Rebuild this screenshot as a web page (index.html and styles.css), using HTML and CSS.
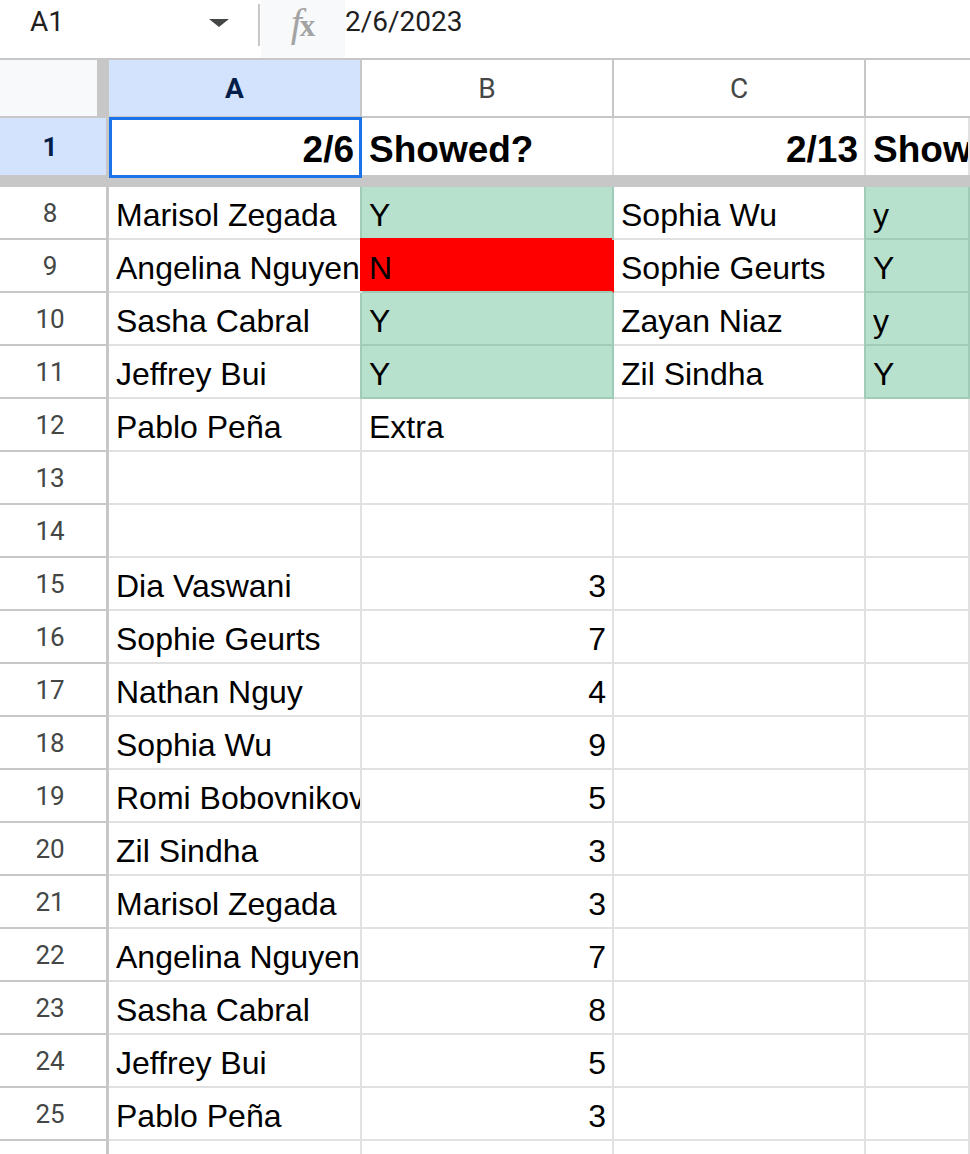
FILE: index.html
```html
<!DOCTYPE html>
<html>
<head>
<meta charset="utf-8">
<title>Sheet</title>
<link rel="stylesheet" href="styles.css">
</head>
<body>
<div class="app">
  <div class="topbar">
    <div class="namebox"><span class="ref">A1</span><span class="caret"></span></div>
    <div class="divider"></div>
    <div class="fxbox"><span class="fx"><span class="fx-f">f</span><span class="fx-x">x</span></span></div>
    <div class="formula">2/6/2023</div>
  </div>
  <div class="sheet">
    <div class="corner"></div>
    <div class="ch sel">A</div>
    <div class="ch">B</div>
    <div class="ch">C</div>
    <div class="ch wide"></div>

    <div class="rh sel r1h">1</div>
    <div class="c r1 right">2/6</div>
    <div class="c r1">Showed?</div>
    <div class="c r1 right">2/13</div>
    <div class="c r1">Showed?</div>

    <div class="freeze"></div>

    <div class="rh">8</div><div class="c">Marisol Zegada</div><div class="c g">Y</div><div class="c">Sophia Wu</div><div class="c g">y</div>
    <div class="rh">9</div><div class="c">Angelina Nguyen</div><div class="c red">N</div><div class="c">Sophie Geurts</div><div class="c g">Y</div>
    <div class="rh">10</div><div class="c">Sasha Cabral</div><div class="c g">Y</div><div class="c">Zayan Niaz</div><div class="c g">y</div>
    <div class="rh">11</div><div class="c">Jeffrey Bui</div><div class="c g">Y</div><div class="c">Zil Sindha</div><div class="c g">Y</div>
    <div class="rh">12</div><div class="c">Pablo Peña</div><div class="c">Extra</div><div class="c"></div><div class="c"></div>
    <div class="rh">13</div><div class="c"></div><div class="c"></div><div class="c"></div><div class="c"></div>
    <div class="rh">14</div><div class="c"></div><div class="c"></div><div class="c"></div><div class="c"></div>
    <div class="rh">15</div><div class="c">Dia Vaswani</div><div class="c right">3</div><div class="c"></div><div class="c"></div>
    <div class="rh">16</div><div class="c">Sophie Geurts</div><div class="c right">7</div><div class="c"></div><div class="c"></div>
    <div class="rh">17</div><div class="c">Nathan Nguy</div><div class="c right">4</div><div class="c"></div><div class="c"></div>
    <div class="rh">18</div><div class="c">Sophia Wu</div><div class="c right">9</div><div class="c"></div><div class="c"></div>
    <div class="rh">19</div><div class="c">Romi Bobovnikova</div><div class="c right">5</div><div class="c"></div><div class="c"></div>
    <div class="rh">20</div><div class="c">Zil Sindha</div><div class="c right">3</div><div class="c"></div><div class="c"></div>
    <div class="rh">21</div><div class="c">Marisol Zegada</div><div class="c right">3</div><div class="c"></div><div class="c"></div>
    <div class="rh">22</div><div class="c">Angelina Nguyen</div><div class="c right">7</div><div class="c"></div><div class="c"></div>
    <div class="rh">23</div><div class="c">Sasha Cabral</div><div class="c right">8</div><div class="c"></div><div class="c"></div>
    <div class="rh">24</div><div class="c">Jeffrey Bui</div><div class="c right">5</div><div class="c"></div><div class="c"></div>
    <div class="rh">25</div><div class="c">Pablo Peña</div><div class="c right">3</div><div class="c"></div><div class="c"></div>
    <div class="rh last"></div><div class="c"></div><div class="c"></div><div class="c"></div><div class="c"></div>

    <div class="selbox"></div>
  </div>
</div>
</body>
</html>
```
FILE: styles.css
```css
html, body {
  margin: 0;
  padding: 0;
  background: #ffffff;
}
body {
  width: 970px;
  height: 1154px;
  overflow: hidden;
}
.app {
  width: 970px;
  height: 1154px;
  overflow: hidden;
}

/* ---------- formula bar ---------- */
.topbar {
  display: flex;
  align-items: flex-start;
  height: 58px;
  border-bottom: 2px solid #c7c7c7;
  font-family: Roboto, "Liberation Sans", sans-serif;
  color: #1f1f1f;
}
.namebox {
  width: 258px;
  height: 44px;
  box-sizing: border-box;
  padding-left: 30px;
  display: flex;
  align-items: center;
}
.ref {
  font-size: 28px;
  line-height: 44px;
  flex: 1;
}
.caret {
  width: 0;
  height: 0;
  border-left: 10px solid transparent;
  border-right: 10px solid transparent;
  border-top: 8px solid #444746;
  margin-right: 29px;
  margin-top: 1px;
}
.divider {
  width: 2px;
  height: 42px;
  margin-top: 4px;
  background: #c7c7c7;
}
.fxbox {
  width: 84px;
  height: 58px;
  margin-left: 1px;
  background: #f8f9fa;
  display: flex;
  justify-content: center;
}
.fx {
  font-family: "Liberation Serif", serif;
  line-height: 46px;
  color: #a3a3a3;
  display: flex;
  align-items: baseline;
}
.fx-f {
  font-style: italic;
  font-size: 40px;
  margin-right: -2px;
}
.fx-x {
  font-weight: bold;
  font-size: 31px;
}
.formula {
  font-size: 28px;
  line-height: 44px;
  color: #1f1f1f;
}

/* ---------- sheet grid ---------- */
.sheet {
  position: relative;
  display: grid;
  grid-template-columns: 109px 253px 252px 252px 1fr;
  grid-template-rows: 58px 57px 12px repeat(19, 53px);
}
.corner {
  background: #f8f9fa;
  border-right: 12px solid #c7c7c7;
  border-bottom: 2px solid #c7c7c7;
}
.ch {
  display: flex;
  align-items: center;
  justify-content: center;
  border-right: 2px solid #c7c7c7;
  border-bottom: 2px solid #c7c7c7;
  font-family: Roboto, "Liberation Sans", sans-serif;
  font-size: 28px;
  color: #444746;
  background: #ffffff;
}
.ch.wide {
  border-right: 0;
}
.ch.sel {
  background: #d3e3fd;
  color: #041e49;
  font-weight: bold;
}
.rh {
  display: flex;
  align-items: center;
  justify-content: center;
  padding-right: 6px;
  border-right: 3px solid #c7c7c7;
  border-bottom: 2px solid #c7c7c7;
  font-family: Roboto, "Liberation Sans", sans-serif;
  font-size: 26px;
  color: #444746;
  background: #ffffff;
}
.rh.sel {
  background: #d3e3fd;
  color: #041e49;
  font-weight: bold;
}
.rh.r1h {
  border-bottom: 0;
}
.c {
  min-width: 0;
  display: flex;
  align-items: flex-end;
  justify-content: flex-start;
  overflow: hidden;
  white-space: nowrap;
  padding: 0 6px 4px 7px;
  border-right: 2px solid #e1e1e1;
  border-bottom: 2px solid #e1e1e1;
  font-family: "Liberation Sans", Arial, sans-serif;
  font-size: 32px;
  line-height: 37px;
  color: #000000;
  background: #ffffff;
}
.c.right {
  justify-content: flex-end;
}
.c.r1 {
  border-bottom: 0;
  font-weight: bold;
  font-size: 37px;
  line-height: 42px;
}
.c.g {
  background: #b7e1cd;
  border-right-color: #9fcbb7;
  border-bottom-color: #9fcbb7;
  box-shadow: -2px 0 0 #9fcbb7;
}
.c.red {
  background: #ff0000;
  border-right-color: #ff0000;
  border-bottom-color: #9fcbb7;
  box-shadow: -2px -2px 0 #ff0000;
}
.freeze {
  grid-column: 1 / -1;
  background: #c7c7c7;
}
.selbox {
  position: absolute;
  left: 109px;
  top: 57px;
  width: 253px;
  height: 61px;
  box-sizing: border-box;
  border: 3px solid #1a73e8;
  pointer-events: none;
}
```
